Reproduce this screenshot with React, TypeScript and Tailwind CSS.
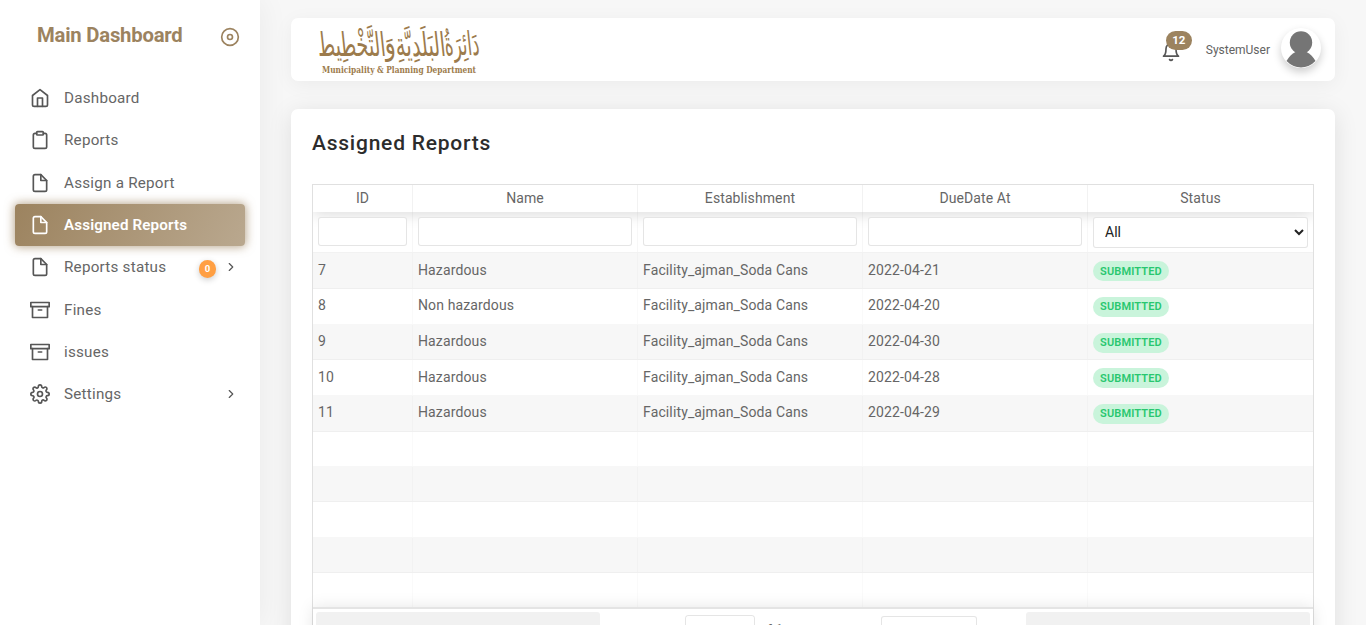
import React from "react";
import {
  FiArchive, FiBell, FiChevronRight, FiClipboard, FiDisc, FiFile, FiHome, FiSettings,
} from "react-icons/fi";
import type { IconType } from "react-icons";

type NavItem = { label: string; icon: IconType; active?: boolean; badge?: string; expandable?: boolean };

const navItems: NavItem[] = [
  { label: "Dashboard", icon: FiHome },
  { label: "Reports", icon: FiClipboard },
  { label: "Assign a Report", icon: FiFile },
  { label: "Assigned Reports", icon: FiFile, active: true },
  { label: "Reports status", icon: FiFile, badge: "0", expandable: true },
  { label: "Fines", icon: FiArchive },
  { label: "issues", icon: FiArchive },
  { label: "Settings", icon: FiSettings, expandable: true },
];

const columns = ["ID", "Name", "Establishment", "DueDate At", "Status"];

const rows = [
  ["7", "Hazardous", "Facility_ajman_Soda Cans", "2022-04-21"],
  ["8", "Non hazardous", "Facility_ajman_Soda Cans", "2022-04-20"],
  ["9", "Hazardous", "Facility_ajman_Soda Cans", "2022-04-30"],
  ["10", "Hazardous", "Facility_ajman_Soda Cans", "2022-04-28"],
  ["11", "Hazardous", "Facility_ajman_Soda Cans", "2022-04-29"],
];

const grid = "grid grid-cols-[100px_225px_225px_225px_225px]";

function Sidebar() {
  return (
    <aside className="h-full w-[260px] shrink-0 bg-white shadow-[0_0_30px_0_rgba(0,0,0,0.06)]">
      <div className="flex h-[77px] items-start justify-between pl-[37px] pr-5">
        <h2 className="mt-[21px] text-[20.3px] font-bold leading-7 tracking-[-0.22px] text-[#9c835f]">Main Dashboard</h2>
        <FiDisc className="mt-[27px] size-5 text-[#9c835f]" />
      </div>
      <nav className="flex flex-col px-[15px]">
        {navItems.map(({ label, icon: Icon, active, badge, expandable }) => (
          <a
            key={label}
            className={
              active
                ? "flex h-[42.3px] items-center rounded-[4px] bg-[linear-gradient(118deg,#9c835f,rgba(156,131,95,0.7))] pl-[15px] pr-[7px] font-semibold text-white shadow-[0_0_10px_1px_rgba(156,131,95,0.7)]"
                : "flex h-[42.3px] items-center pl-[15px] pr-[7px] text-[#565656]"
            }
          >
            <Icon className="mr-3.5 size-5" />
            <span className={active ? "text-[15.2px] tracking-[0.13px]" : "mt-[0.8px] text-[15.2px] tracking-[0.24px] text-[#666]"}>{label}</span>
            <span className="ml-auto flex items-center">
              {badge && (
                <span className="mr-2 mt-[3px] flex h-[18px] w-[17px] items-center justify-center rounded-full bg-[#ff9f43] text-[9.5px] font-bold text-white shadow-[0_2px_6px_rgba(0,0,0,0.2)]">
                  {badge}
                </span>
              )}
              {expandable && <FiChevronRight className="-mt-[0.6px] size-3.5" />}
            </span>
          </a>
        ))}
      </nav>
    </aside>
  );
}

const logoWords = [
  { text: "دَائِرَةُ", x: 127, width: 35, y: 19.5 },
  { text: "البَلَدِيَّةِ", x: 78, width: 50, y: 20 },
  { text: "وَ", x: 67, width: 11, y: 19 },
  { text: "التَّخْطِيط", x: 0, width: 68, y: 20 },
];

function Logo() {
  return (
    <svg className="ml-7 h-[60px] w-[166px] overflow-visible" viewBox="0 0 166 60" fill="#9c7b4c">
      <g transform="translate(-4 3) skewX(6) scale(1 1.65)">
        {logoWords.map((w) => (
          <text
            key={w.text} x={w.x + w.width / 2} y={w.y} textAnchor="middle" direction="rtl"
            fontFamily="'DejaVu Sans', sans-serif" fontSize="20"
            textLength={w.width} lengthAdjust="spacingAndGlyphs"
          >
            {w.text}
          </text>
        ))}
      </g>
      <text
        x="3" y="52.8" fontFamily="'DejaVu Serif', serif" fontWeight="700" fontSize="9"
        textLength="154" lengthAdjust="spacingAndGlyphs"
      >
        Municipality &amp; Planning Department
      </text>
    </svg>
  );
}

function Navbar() {
  return (
    <header className="flex h-[63px] shrink-0 items-center rounded-[7px] bg-white pr-3.5 shadow-[0_4px_20px_rgba(0,0,0,0.05)]">
      <Logo />
      <div className="relative ml-auto mr-[25px]">
        <FiBell className="mt-[4px] size-5 text-[#565656]" />
        <span className="absolute -top-[6.5px] left-[5px] flex h-[19px] w-[26px] items-center justify-center rounded-full bg-[#9c835f] text-[11.5px] font-bold text-white">
          12
        </span>
      </div>
      <span className="mr-[11px] text-[12px] text-[#626262]">SystemUser</span>
      <svg className="-mt-[3px] size-10 rounded-full bg-white shadow-[0_4px_8px_rgba(0,0,0,0.2)]" viewBox="0 0 40 40" fill="#757575">
        <ellipse cx="20" cy="14.6" rx="11.2" ry="11.3" />
        <path d="M5.5 33C8 28.5 11 26 14.5 24H25.5C29 26 32 28.5 34.500 33Q28 39.500 20 39.500T5.500 33Z" />
      </svg>
    </header>
  );
}

function TableRow({ cells, striped }: { cells?: string[]; striped: boolean }) {
  return (
    <div
      className={`${grid} shrink-0 border-b border-black/[0.03] ${cells ? "h-[35.7px]" : "h-[35.3px]"} ${striped ? "bg-black/[0.03]" : ""}`}
    >
      {columns.map((c, j) => (
        <div key={c} className="border-r border-black/[0.02] px-[5px] pt-[6.2px] leading-[20px] tracking-[0.13px] last:border-r-0">
          {cells && j < 4 && cells[j]}
          {cells && j === 4 && (
            <span className="mt-[1.6px] flex h-5 w-[76px] items-center justify-center rounded-full bg-[#c9f4db] pt-px text-[11px] font-semibold tracking-[0.15px] text-[#28c76f]">
              SUBMITTED
            </span>
          )}
        </div>
      ))}
    </div>
  );
}

function ReportsTable() {
  return (
    <div className="flex h-[560px] w-[1002px] flex-col border border-[#e0e0e0] text-[14px] text-[#666]">
      <div className="flex shrink-0 flex-col overflow-hidden">
        <div className={`${grid} h-[27px] shrink-0 shadow-[0_2px_15px_0_rgba(0,0,0,0.15)]`}>
          {columns.map((c) => (
            <div key={c} className="flex items-center justify-center border-r border-black/5 tracking-[0.1px] last:border-r-0">{c}</div>
          ))}
        </div>
        <div className={`${grid} h-[41.4px] shrink-0 border-b border-black/5`}>
          {columns.map((c) => (
            <div key={c} className="border-r border-black/[0.03] px-[5px] pt-[5px] last:border-r-0">
              {c === "Status" ? (
                <select className="h-[31px] w-full rounded-[3px] border border-black/10 bg-white px-[7px] pb-px text-[14px] text-[#222]">
                  <option>All</option>
                </select>
              ) : (
                <input className="block h-[29px] w-full rounded-[3px] border border-black/10 bg-white px-[7px]" />
              )}
            </div>
          ))}
        </div>
        {Array.from({ length: 10 }, (_, i) => (
          <TableRow key={i} cells={rows[i]} striped={i % 2 === 0} />
        ))}
      </div>
      <div className="relative z-10 -mt-[0.9px] flex h-[60px] border-t-2 border-[#e4e4e4] bg-white p-[3px] shadow-[0_0_15px_0_rgba(0,0,0,0.1)]">
        <button className="h-[38px] w-[284px] rounded-[3px] bg-[#f1f1f1] pl-[2px] text-[14px]">Previous</button>
        <div className="flex flex-1 items-start pl-[45px]">
          <span className="mt-[9px] w-[40px]">Page</span>
          <input className="mr-[4px] mt-[3px] h-[33px] w-[70px] rounded-[3px] border border-black/10 text-center" defaultValue="1" />
          <span className="mt-[8px] w-[122px]">of 1</span>
          <select className="mt-1 h-[33px] w-24 rounded-[3px] border border-black/10 bg-white px-[7px]">
            <option>10 rows</option>
          </select>
        </div>
        <button className="h-[38px] w-[284px] rounded-[3px] bg-[#f1f1f1] pt-[1px] text-[14px]">Next</button>
      </div>
    </div>
  );
}

export default function App() {
  return (
    <div className="flex h-[625px] w-[1366px] overflow-hidden bg-[#f7f7f7] font-['Roboto',sans-serif]">
      <Sidebar />
      <main className="flex w-[1106px] flex-col px-[31px] pt-[18px]">
        <Navbar />
        <section className="mt-7 h-[700px] shrink-0 rounded-[7px] bg-white pl-[21px] pt-[19px] shadow-[0_4px_25px_0_rgba(0,0,0,0.1)]">
          <h1 className="mb-[26px] text-[21px] font-medium leading-[30px] tracking-[0.77px] text-[#2c2c2c]">Assigned Reports</h1>
          <ReportsTable />
        </section>
      </main>
    </div>
  );
}
